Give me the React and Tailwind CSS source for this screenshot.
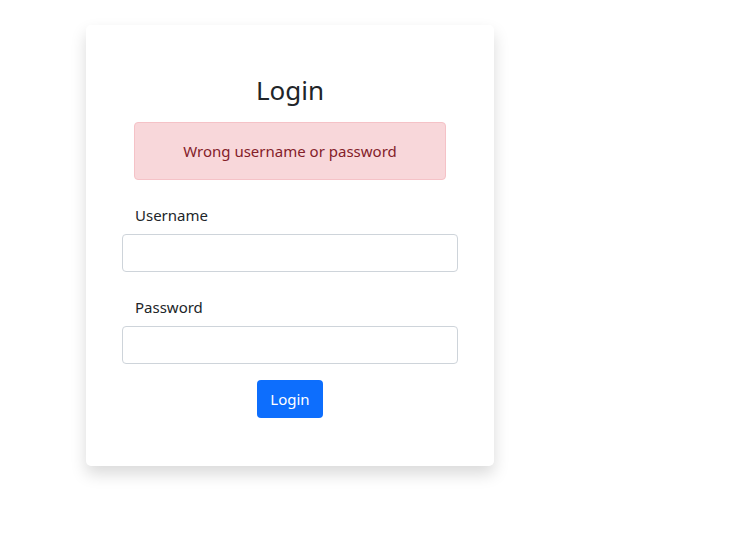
export default function App() {
  return (
    <div className="min-h-[550px] w-[756px] bg-white text-[#212529]" style={{ fontFamily: '"Noto Sans", sans-serif' }}>
      <div className="pt-[25px] pl-[86px]">
        <div className="w-[408px] rounded-[5px] bg-white shadow-[0_8px_16px_rgba(0,0,0,0.15)] px-[36px] pt-[50px] pb-[48px]">
          <h3 className="text-center text-[26px] leading-[31px] font-normal">Login</h3>
          <div className="mx-[12px] mt-[16px] rounded-[4px] border border-[#f5c2c7] bg-[#f8d7da] py-[16px] text-center text-[15px] leading-[24px] text-[#842029]">
            Wrong username or password
          </div>
          <div className="mt-[23px]">
            <label className="block pl-[13px] text-[15px] leading-[24px]">Username</label>
            <input type="text" className="mt-[7px] block h-[38px] w-full rounded-[4px] border border-[#ced4da] bg-white px-3 outline-none" />
          </div>
          <div className="mt-[23px]">
            <label className="block pl-[13px] text-[15px] leading-[24px]">Password</label>
            <input type="password" className="mt-[7px] block h-[38px] w-full rounded-[4px] border border-[#ced4da] bg-white px-3 outline-none" />
          </div>
          <div className="mt-[16px] flex justify-center">
            <button className="h-[38px] w-[66px] rounded-[4px] bg-[#0d6efd] text-[15px] leading-[24px] text-white">Login</button>
          </div>
        </div>
      </div>
    </div>
  );
}
